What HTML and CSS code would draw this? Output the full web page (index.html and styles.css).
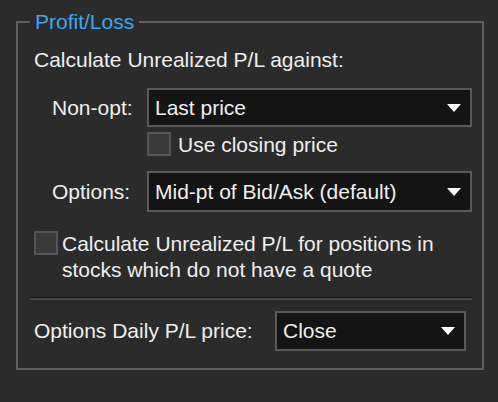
FILE: index.html
```html
<!DOCTYPE html>
<html lang="en">
<head>
    <meta charset="UTF-8">
    <meta name="viewport" content="width=device-width, initial-scale=1.0">
    <title>Profit/Loss</title>
    <link rel="stylesheet" href="styles.css">
</head>
<body>

    <fieldset class="group">
        <legend>Profit/Loss</legend>

        <div class="heading">Calculate Unrealized P/L against:</div>

        <div class="row row-first">
            <span class="label">Non-opt:</span>
            <div class="select">
                <span>Last price</span>
                <svg class="arrow" width="14" height="8" viewBox="0 0 14 8"><polygon points="0,0 14,0 7,8" fill="#fff"/></svg>
            </div>
        </div>

        <div class="check check-sub">
            <span class="box"></span>
            <span>Use closing price</span>
        </div>

        <div class="row row-options">
            <span class="label">Options:</span>
            <div class="select select-tall">
                <span>Mid-pt of Bid/Ask (default)</span>
                <svg class="arrow" width="14" height="8" viewBox="0 0 14 8"><polygon points="0,0 14,0 7,8" fill="#fff"/></svg>
            </div>
        </div>

        <div class="check check-wide">
            <span class="box"></span>
            <span>Calculate Unrealized P/L for positions in<br>stocks which do not have a quote</span>
        </div>

        <div class="separator"></div>

        <div class="daily">
            <span>Options Daily P/L price:</span>
            <div class="select select-small">
                <span>Close</span>
                <svg class="arrow" width="14" height="8" viewBox="0 0 14 8"><polygon points="0,0 14,0 7,8" fill="#fff"/></svg>
            </div>
        </div>
    </fieldset>

</body>
</html>
```

FILE: styles.css
```css
body {
    font-family: "Liberation Sans", Arial, sans-serif;
    font-size: 21px;
    color: #efefef;
    background-color: #2b2b2b;
    margin: 0;
    padding: 11px 0 0 16px;
}

.group {
    box-sizing: border-box;
    width: 468px;
    height: 359px;
    margin: 0;
    padding: 0 10px 0 16px;
    border: 2px solid #5e5e5e;
}

.group legend {
    color: #3fa6ea;
    padding: 0 5px;
    margin-left: -4px;
    line-height: 22px;
}

.heading {
    margin-top: 14px;
    line-height: 26px;
}

.row {
    display: flex;
    align-items: center;
}

.row-first {
    margin-top: 15px;
}

.row-options {
    margin-top: 13px;
}

.label {
    width: 95px;
    padding-left: 18px;
}

.select {
    box-sizing: border-box;
    flex: 1;
    height: 39px;
    display: flex;
    align-items: center;
    justify-content: space-between;
    padding: 0 9px 0 6px;
    background-color: #141414;
    border: 2px solid #5a5a5a;
}

.select-tall {
    height: 41px;
}

.arrow {
    display: block;
}

.check {
    display: flex;
    align-items: flex-start;
    line-height: 26px;
}

.check-sub {
    margin-top: 5px;
    margin-left: 113px;
}

.check-wide {
    margin-top: 19px;
    margin-left: 0;
}

.box {
    box-sizing: border-box;
    width: 24px;
    height: 24px;
    margin-right: 7px;
    flex-shrink: 0;
    background-color: #3a3a3a;
    border: 2px solid #555;
}

.check-wide .box {
    margin-right: 4px;
}

.separator {
    margin: 14px 0 0 -4px;
    height: 1px;
    background-color: #161616;
    border-bottom: 2px solid #474747;
}

.daily {
    display: flex;
    align-items: center;
    margin-top: 11px;
}

.select-small {
    flex: none;
    width: 191px;
    height: 40px;
    margin: 0 6px 0 auto;
}
```
